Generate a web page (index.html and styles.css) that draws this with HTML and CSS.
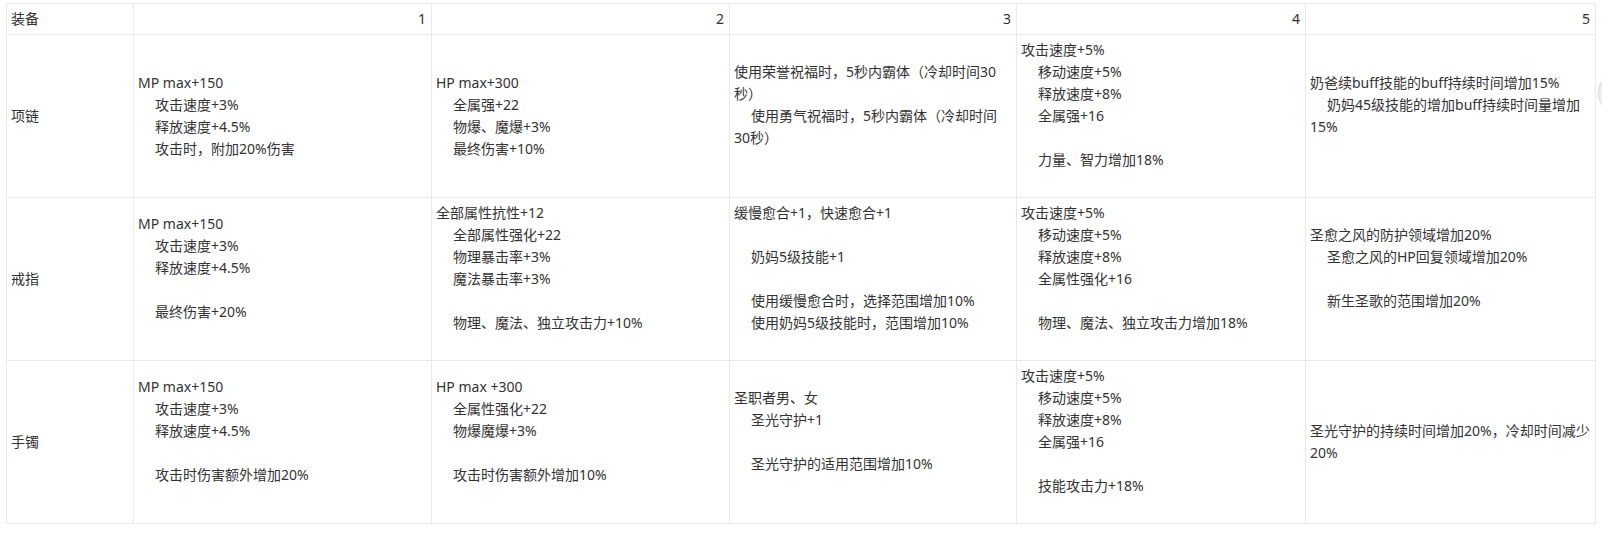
FILE: index.html
```html
<!DOCTYPE html>
<html lang="zh-CN">
<head>
<meta charset="utf-8">
<title>装备</title>
<link rel="stylesheet" href="styles.css">
</head>
<body>
<div class="page">
<table class="equip">
  <colgroup>
    <col class="c1"><col class="c2"><col class="c3"><col class="c4"><col class="c5"><col class="c6">
  </colgroup>
  <thead>
    <tr>
      <th class="name">装备</th>
      <th class="num">1</th>
      <th class="num">2</th>
      <th class="num">3</th>
      <th class="num">4</th>
      <th class="num">5</th>
    </tr>
  </thead>
  <tbody>
    <tr>
      <td class="name">项链</td>
      <td>
        <div class="ln">MP max+150</div>
        <div class="ln in">攻击速度+3%</div>
        <div class="ln in">释放速度+4.5%</div>
        <div class="ln in">攻击时，附加20%伤害</div>
      </td>
      <td>
        <div class="ln">HP max+300</div>
        <div class="ln in">全属强+22</div>
        <div class="ln in">物爆、魔爆+3%</div>
        <div class="ln in">最终伤害+10%</div>
      </td>
      <td>
        <div class="ln">使用荣誉祝福时，5秒内霸体（冷却时间30秒）</div>
        <div class="ln in">使用勇气祝福时，5秒内霸体（冷却时间30秒）</div>
        <div class="ln blank"></div>
      </td>
      <td>
        <div class="ln">攻击速度+5%</div>
        <div class="ln in">移动速度+5%</div>
        <div class="ln in">释放速度+8%</div>
        <div class="ln in">全属强+16</div>
        <div class="ln blank"></div>
        <div class="ln in">力量、智力增加18%</div>
        <div class="ln blank"></div>
      </td>
      <td>
        <div class="ln">奶爸续buff技能的buff持续时间增加15%</div>
        <div class="ln in">奶妈45级技能的增加buff持续时间量增加15%</div>
        <div class="ln blank"></div>
      </td>
    </tr>
    <tr>
      <td class="name">戒指</td>
      <td>
        <div class="ln">MP max+150</div>
        <div class="ln in">攻击速度+3%</div>
        <div class="ln in">释放速度+4.5%</div>
        <div class="ln blank"></div>
        <div class="ln in">最终伤害+20%</div>
        <div class="ln blank"></div>
      </td>
      <td>
        <div class="ln">全部属性抗性+12</div>
        <div class="ln in">全部属性强化+22</div>
        <div class="ln in">物理暴击率+3%</div>
        <div class="ln in">魔法暴击率+3%</div>
        <div class="ln blank"></div>
        <div class="ln in">物理、魔法、独立攻击力+10%</div>
        <div class="ln blank"></div>
      </td>
      <td>
        <div class="ln">缓慢愈合+1，快速愈合+1</div>
        <div class="ln blank"></div>
        <div class="ln in">奶妈5级技能+1</div>
        <div class="ln blank"></div>
        <div class="ln in">使用缓慢愈合时，选择范围增加10%</div>
        <div class="ln in">使用奶妈5级技能时，范围增加10%</div>
        <div class="ln blank"></div>
      </td>
      <td>
        <div class="ln">攻击速度+5%</div>
        <div class="ln in">移动速度+5%</div>
        <div class="ln in">释放速度+8%</div>
        <div class="ln in">全属性强化+16</div>
        <div class="ln blank"></div>
        <div class="ln in">物理、魔法、独立攻击力增加18%</div>
        <div class="ln blank"></div>
      </td>
      <td>
        <div class="ln">圣愈之风的防护领域增加20%</div>
        <div class="ln in">圣愈之风的HP回复领域增加20%</div>
        <div class="ln blank"></div>
        <div class="ln in">新生圣歌的范围增加20%</div>
        <div class="ln blank"></div>
      </td>
    </tr>
    <tr>
      <td class="name">手镯</td>
      <td>
        <div class="ln">MP max+150</div>
        <div class="ln in">攻击速度+3%</div>
        <div class="ln in">释放速度+4.5%</div>
        <div class="ln blank"></div>
        <div class="ln in">攻击时伤害额外增加20%</div>
        <div class="ln blank"></div>
      </td>
      <td>
        <div class="ln">HP max +300</div>
        <div class="ln in">全属性强化+22</div>
        <div class="ln in">物爆魔爆+3%</div>
        <div class="ln blank"></div>
        <div class="ln in">攻击时伤害额外增加10%</div>
        <div class="ln blank"></div>
      </td>
      <td>
        <div class="ln">圣职者男、女</div>
        <div class="ln in">圣光守护+1</div>
        <div class="ln blank"></div>
        <div class="ln in">圣光守护的适用范围增加10%</div>
        <div class="ln blank"></div>
      </td>
      <td>
        <div class="ln">攻击速度+5%</div>
        <div class="ln in">移动速度+5%</div>
        <div class="ln in">释放速度+8%</div>
        <div class="ln in">全属强+16</div>
        <div class="ln blank"></div>
        <div class="ln in">技能攻击力+18%</div>
        <div class="ln blank"></div>
      </td>
      <td>
        <div class="ln">圣光守护的持续时间增加20%，冷却时间减少20%</div>
      </td>
    </tr>
  </tbody>
</table>
</div>
<div class="float-btn"></div>
</body>
</html>
```
FILE: styles.css
```css
html, body {
  margin: 0;
  padding: 0;
  background: #ffffff;
  overflow: hidden;
}

body {
  font-family: "Noto Sans", "Noto Sans CJK SC", sans-serif;
  font-size: 14px;
  color: #333333;
}

.page {
  padding: 3px 0 0 6px;
}

.equip {
  border-collapse: collapse;
  table-layout: fixed;
  width: 1590px;
}

.c1 { width: 127px; }
.c2 { width: 298px; }
.c3 { width: 298px; }
.c4 { width: 287px; }
.c5 { width: 289px; }
.c6 { width: 290px; }

.equip th,
.equip td {
  border: 1px solid #e6e9ed;
  padding: 4px 5px 4px 4px;
  line-height: 22px;
  vertical-align: middle;
  text-align: left;
  font-weight: normal;
}

.equip th.num {
  text-align: right;
}

.ln {
  min-height: 22px;
}

.ln.in {
  text-indent: 17px;
}

.float-btn {
  position: fixed;
  left: 1599px;
  top: 75px;
  width: 36px;
  height: 36px;
  border-radius: 50%;
  background: #f0f0f0;
  box-shadow: 0 0 3px rgba(0, 0, 0, 0.35);
}
```
